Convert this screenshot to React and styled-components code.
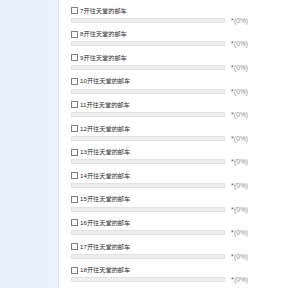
import React from "react";
import styled, { createGlobalStyle } from "styled-components";

const GlobalStyle = createGlobalStyle`
  html, body {
    margin: 0;
    padding: 0;
    background: #ffffff;
    font-family: "Liberation Sans", "Noto Sans CJK SC", sans-serif;
  }
`;

const items = [7, 8, 9, 10, 11, 12, 13, 14, 15, 16, 17, 18];

const App = () => {
  return (
    <>
      <GlobalStyle />
      <Page>
        <Sidebar>
          <SidebarInner />
        </Sidebar>
        <Content>
          <VoteList>
            {items.map((n) => (
              <VoteItem key={n}>
                <LabelRow>
                  <CheckBox type="checkbox" />
                  <LabelText>{n}开往天堂的邮车</LabelText>
                </LabelRow>
                <BarRow>
                  <Bar>
                    <BarFill style={{ width: "0%" }} />
                  </Bar>
                  <Percent>
                    <Star>*</Star>(0%)
                  </Percent>
                </BarRow>
              </VoteItem>
            ))}
          </VoteList>
        </Content>
      </Page>
    </>
  );
};

export default App;

const Page = styled.div`
  display: flex;
  width: 288px;
  height: 288px;
  overflow: hidden;
`;

const Sidebar = styled.div`
  width: 58px;
  flex-shrink: 0;
  background: #eaf2fc;
  border-right: 1px solid #dfe6ef;
  display: flex;
`;

const SidebarInner = styled.div`
  width: 49px;
  background: #e8f0fb;
`;

const Content = styled.div`
  flex: 1;
  background: #ffffff;
  padding-left: 12px;
`;

const VoteList = styled.div`
  margin-top: 0.6px;
`;

const VoteItem = styled.div`
  height: 23.6px;
  padding-top: 5px;
  box-sizing: border-box;
`;

const LabelRow = styled.div`
  display: flex;
  align-items: center;
  height: 10px;
`;

const CheckBox = styled.input`
  appearance: none;
  margin: 0 2px 0 0;
  width: 7px;
  height: 7px;
  border: 1px solid #7f7f7f;
  background: #fafafa;
  box-sizing: border-box;
`;

const LabelText = styled.span`
  font-size: 6.2px;
  color: #2e2e2e;
  line-height: 10px;
`;

const BarRow = styled.div`
  display: flex;
  align-items: center;
  margin-top: 1.2px;
  height: 7px;
`;

const Bar = styled.div`
  width: 154px;
  height: 5px;
  background: #eeeeee;
  border: 1px solid #e2e2e2;
  box-sizing: border-box;
`;

const BarFill = styled.div`
  height: 100%;
  background: #6aa1de;
`;

const Percent = styled.span`
  margin-left: 6px;
  font-size: 6.6px;
  color: #8c8c8c;
  white-space: nowrap;
`;

const Star = styled.span`
  color: #555555;
  margin-right: 0.5px;
`;
